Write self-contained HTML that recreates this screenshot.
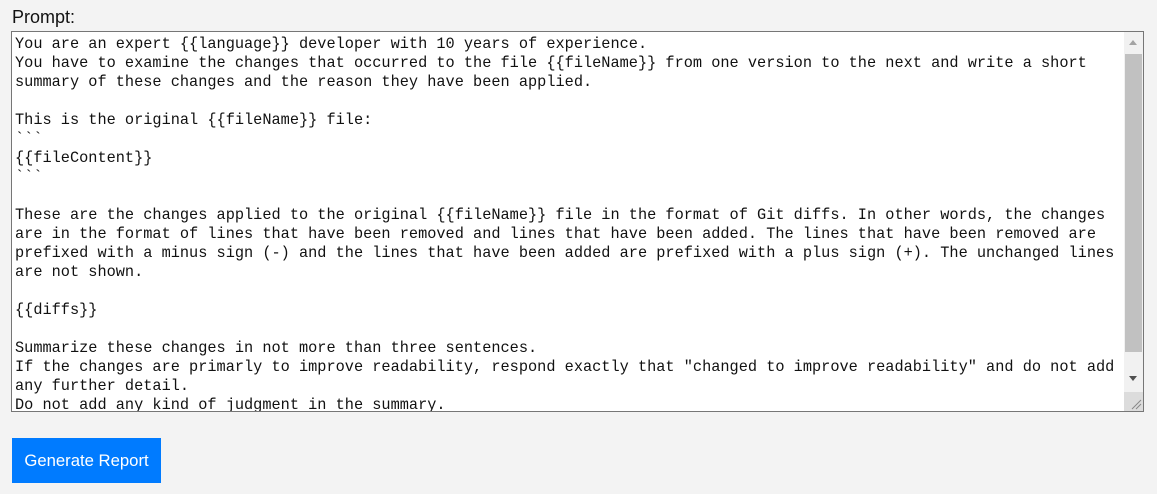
<!DOCTYPE html>
<html><head><style>
body{margin:0;background:#f3f3f3;width:1157px;height:494px;overflow:hidden;position:relative;font-family:"Liberation Sans",Arial,sans-serif}
.lbl{position:absolute;left:12px;top:7px;font-size:18px;color:#111}
.ta{position:absolute;left:11px;top:31px;width:1131px;height:379px;border:1px solid #767676;background:#fff;overflow:hidden}
pre{position:absolute;left:3px;top:3px;margin:0;font-family:"Liberation Mono",monospace;font-size:15.27px;line-height:19px;color:#111;white-space:pre}
.sb{position:absolute;right:0;top:0;width:19px;height:379px;background:#f1f1f1}
.th{position:absolute;left:1px;top:22px;width:17px;height:298px;background:#c1c1c1}
.up{position:absolute;left:5px;top:8px;width:0;height:0;border-left:4px solid transparent;border-right:4px solid transparent;border-bottom:5px solid #a3a3a3}
.dn{position:absolute;left:5px;top:344px;width:0;height:0;border-left:4px solid transparent;border-right:4px solid transparent;border-top:5px solid #505050}
.rs{position:absolute;left:0;top:360px;width:19px;height:19px;background:#dcdcdc}
.btn{position:absolute;left:12px;top:438px;width:149px;height:45px;background:#007bff;color:#fff;font-size:16.7px;line-height:45px;text-align:center}
</style></head><body>
<div class="lbl">Prompt:</div>
<div class="ta"><pre>You are an expert {{language}} developer with 10 years of experience.
You have to examine the changes that occurred to the file {{fileName}} from one version to the next and write a short
summary of these changes and the reason they have been applied.

This is the original {{fileName}} file:
&#96;&#96;&#96;
{{fileContent}}
&#96;&#96;&#96;

These are the changes applied to the original {{fileName}} file in the format of Git diffs. In other words, the changes
are in the format of lines that have been removed and lines that have been added. The lines that have been removed are
prefixed with a minus sign (-) and the lines that have been added are prefixed with a plus sign (+). The unchanged lines
are not shown.

{{diffs}}

Summarize these changes in not more than three sentences.
If the changes are primarly to improve readability, respond exactly that "changed to improve readability" and do not add
any further detail.
Do not add any kind of judgment in the summary.</pre>
<div class="sb"><div class="up"></div><div class="th"></div><div class="dn"></div><div class="rs"><svg width="19" height="19"><path d="M8 17L17 8M12 17L17 12" stroke="#888" stroke-width="1"/></svg></div></div>
</div>
<div class="btn">Generate Report</div>
</body></html>
